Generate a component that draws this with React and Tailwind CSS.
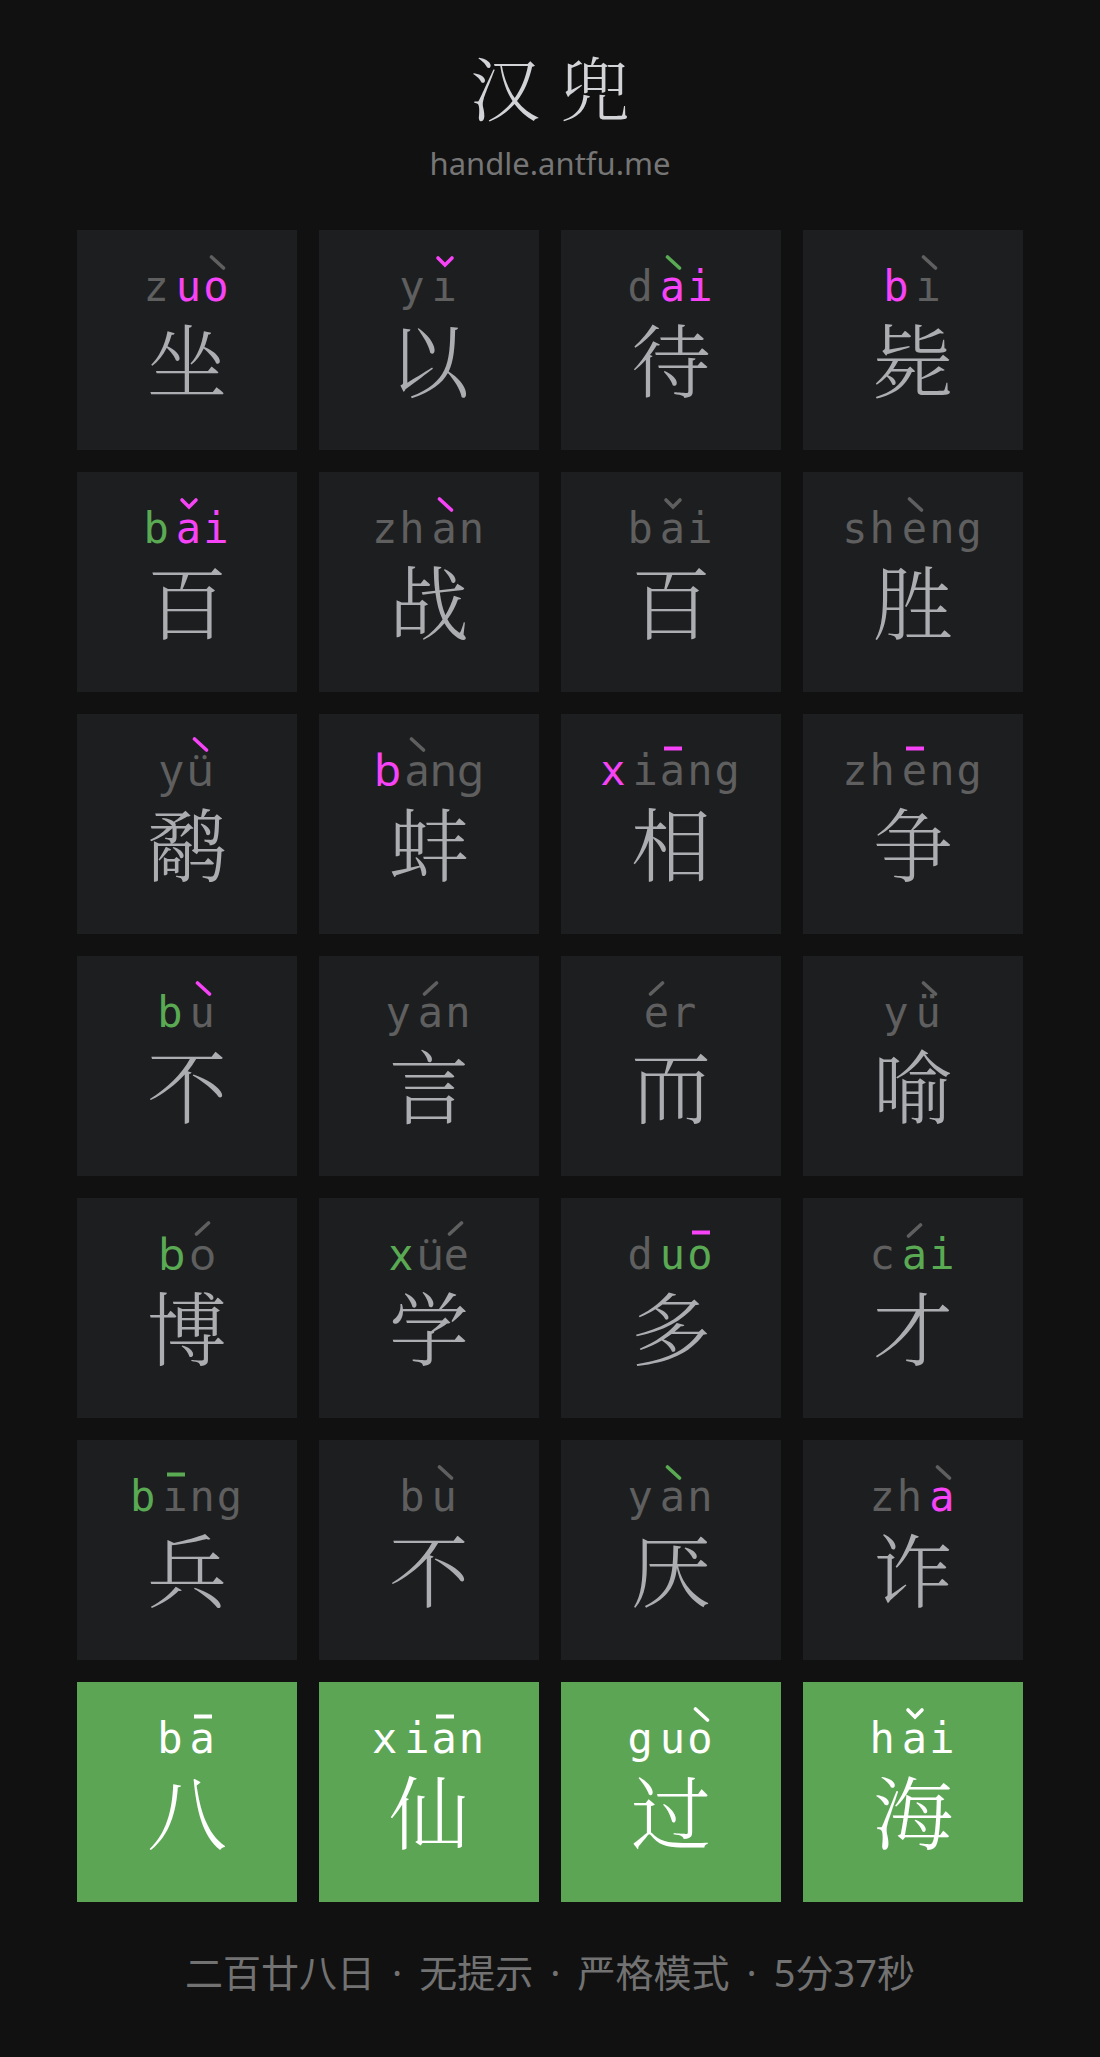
import React from "react";

const G = "#5aa953";
const M = "#f743f7";
const Y = "#5f5f5f";

const rows = [
  [
    { ch: "坐", i: "z", f: "uo", t: 4, ti: 1, ci: Y, cf: M, ct: Y },
    { ch: "以", i: "y", f: "i", t: 3, ti: 0, ci: Y, cf: Y, ct: M },
    { ch: "待", i: "d", f: "ai", t: 4, ti: 0, ci: Y, cf: M, ct: G },
    { ch: "毙", i: "b", f: "i", t: 4, ti: 0, ci: M, cf: Y, ct: Y },
  ],
  [
    { ch: "百", i: "b", f: "ai", t: 3, ti: 0, ci: G, cf: M, ct: M },
    { ch: "战", i: "zh", f: "an", t: 4, ti: 0, ci: Y, cf: Y, ct: M },
    { ch: "百", i: "b", f: "ai", t: 3, ti: 0, ci: Y, cf: Y, ct: Y },
    { ch: "胜", i: "sh", f: "eng", t: 4, ti: 0, ci: Y, cf: Y, ct: Y },
  ],
  [
    { ch: "鹬", i: "y", f: "ü", t: 4, ti: 0, ci: Y, cf: Y, ct: M, p: true },
    { ch: "蚌", i: "b", f: "ang", t: 4, ti: 0, ci: M, cf: Y, ct: Y, p: true },
    { ch: "相", i: "x", f: "iang", t: 1, ti: 1, ci: M, cf: Y, ct: M },
    { ch: "争", i: "zh", f: "eng", t: 1, ti: 0, ci: Y, cf: Y, ct: M },
  ],
  [
    { ch: "不", i: "b", f: "u", t: 4, ti: 0, ci: G, cf: Y, ct: M },
    { ch: "言", i: "y", f: "an", t: 2, ti: 0, ci: Y, cf: Y, ct: Y },
    { ch: "而", i: "", f: "er", t: 2, ti: 0, ci: Y, cf: Y, ct: Y },
    { ch: "喻", i: "y", f: "ü", t: 4, ti: 0, ci: Y, cf: Y, ct: Y },
  ],
  [
    { ch: "博", i: "b", f: "o", t: 2, ti: 0, ci: G, cf: Y, ct: Y, p: true },
    { ch: "学", i: "x", f: "üe", t: 2, ti: 1, ci: G, cf: Y, ct: Y, p: true },
    { ch: "多", i: "d", f: "uo", t: 1, ti: 1, ci: Y, cf: G, ct: M },
    { ch: "才", i: "c", f: "ai", t: 2, ti: 0, ci: Y, cf: G, ct: Y },
  ],
  [
    { ch: "兵", i: "b", f: "ing", t: 1, ti: 0, ci: G, cf: Y, ct: G },
    { ch: "不", i: "b", f: "u", t: 4, ti: 0, ci: Y, cf: Y, ct: Y },
    { ch: "厌", i: "y", f: "an", t: 4, ti: 0, ci: Y, cf: Y, ct: G },
    { ch: "诈", i: "zh", f: "a", t: 4, ti: 0, ci: Y, cf: M, ct: Y },
  ],
  [
    { ch: "八", i: "b", f: "a", t: 1, ti: 0, win: true },
    { ch: "仙", i: "x", f: "ian", t: 1, ti: 1, win: true },
    { ch: "过", i: "g", f: "uo", t: 4, ti: 1, win: true },
    { ch: "海", i: "h", f: "ai", t: 3, ti: 0, win: true },
  ],
];

function Tone({ t, color }) {
  return (
    <svg
      className="absolute top-[-8px] left-1/2 -translate-x-1/2 w-[19px] h-[15px]"
      viewBox="0 0 19 15"
      fill="none"
      stroke={color}
    >
      {t === 1 && <rect x="0.5" y="7.5" width="18" height="4" fill={color} stroke="none" />}
      {t === 2 && <line x1="3" y1="13" x2="15" y2="2" strokeWidth="3.6" strokeLinecap="round" />}
      {t === 3 && (
        <polyline points="2.5,3 9.5,10 16.5,3" strokeWidth="3.6" strokeLinecap="round" strokeLinejoin="miter" />
      )}
      {t === 4 && <line x1="4" y1="2" x2="16" y2="13" strokeWidth="3.6" strokeLinecap="round" />}
    </svg>
  );
}

function Tile({ d }) {
  const ci = d.win ? "#ffffff" : d.ci;
  const cf = d.win ? "#ffffff" : d.cf;
  const ct = d.win ? "#ffffff" : d.ct;
  const fontCls = d.p
    ? "font-['Noto_Sans',sans-serif] text-[44px] leading-[48px] pt-[31px]"
    : "font-['DejaVu_Sans_Mono',monospace] text-[42px] leading-[48px] tracking-[2px] pt-[33px]";
  const finChars = d.f.split("");
  return (
    <div
      className={
        "w-[220px] h-[220px] flex flex-col items-center " +
        (d.win ? "bg-[#5ca555]" : "bg-[#1d1e20]")
      }
    >
      <div className={"h-[82px] flex justify-center whitespace-nowrap " + fontCls}>
        {d.i && (
          <span className={d.p ? "mr-[4px]" : "mr-[5px]"} style={{ color: ci }}>
            {d.i}
          </span>
        )}
        <span style={{ color: cf }}>
          {finChars.map((c, idx) => {
            const toned = idx === d.ti;
            const shown = toned && c === "i" ? "ı" : c;
            return (
              <span key={idx} className="relative inline-block">
                {shown}
                {toned && <Tone t={d.t} color={ct} />}
              </span>
            );
          })}
        </span>
      </div>
      <div
        className={
          "mt-[5px] text-[80px] leading-[80px] font-light font-['Noto_Serif_CJK_SC','Noto_Sans_CJK_SC',serif] " +
          (d.win ? "text-white" : "text-[#acadb1]")
        }
      >
        {d.ch}
      </div>
    </div>
  );
}

export default function App() {
  return (
    <div className="min-h-[2057px] w-full bg-[#111111] flex flex-col items-center">
      <div className="mt-[51px] flex gap-[20px] text-[70px] leading-[70px] font-light text-[#d1d3d7] font-['Noto_Serif_CJK_SC','Noto_Sans_CJK_SC',serif]">
        <span>汉</span>
        <span>兜</span>
      </div>
      <div className="mt-[27px] text-[31px] leading-[31px] text-[#767676] font-['Noto_Sans',sans-serif]">
        handle.antfu.me
      </div>
      <div className="mt-[51px] grid grid-cols-[repeat(4,220px)] gap-[22px]">
        {rows.flat().map((d, k) => (
          <Tile key={k} d={d} />
        ))}
      </div>
      <div className="mt-[51px] flex items-center text-[38px] leading-[38px] text-[#727272] font-['Noto_Sans','Noto_Sans_CJK_SC',sans-serif]">
        <span>二百廿八日</span>
        <span className="mx-[17px]">·</span>
        <span>无提示</span>
        <span className="mx-[17px]">·</span>
        <span>严格模式</span>
        <span className="mx-[17px]">·</span>
        <span>5分37秒</span>
      </div>
    </div>
  );
}
